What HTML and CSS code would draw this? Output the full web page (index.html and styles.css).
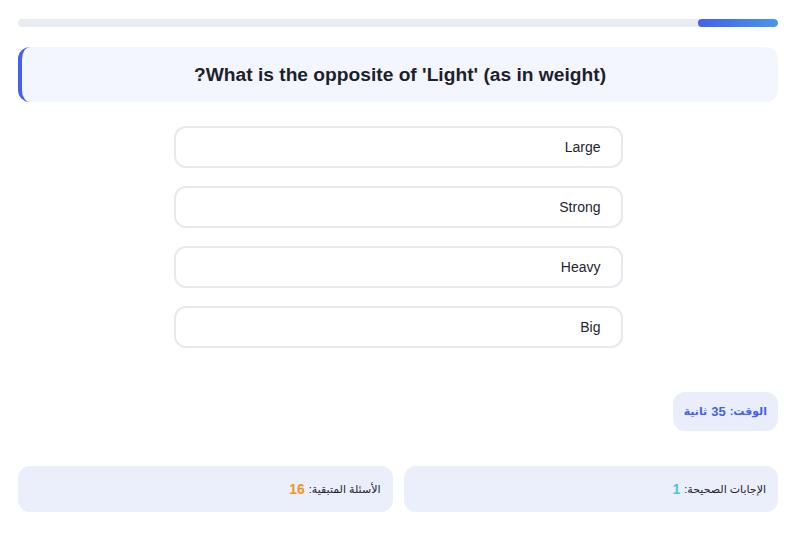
FILE: index.html
```html
<!DOCTYPE html>
<html lang="ar" dir="rtl">
 <head>
     <title>اختبار</title>
     <link rel="stylesheet" href="styles.css">
     <meta charset="UTF-8">
 </head>
 <body>
    <div class="quiz">
      <div class="progress"><div class="progress_fill" style="width: 10.5%"></div></div>
      <div class="question">What is the opposite of 'Light' (as in weight)?</div>
      <div class="options">
        <button class="option">Large</button>
        <button class="option">Strong</button>
        <button class="option">Heavy</button>
        <button class="option">Big</button>
      </div>
      <div class="timer_row">
        <div class="timer">الوقت: <b>35</b> ثانية</div>
      </div>
      <div class="stats">
        <div class="stat">الإجابات الصحيحة: <b class="num_ok">1</b></div>
        <div class="stat">الأسئلة المتبقية: <b class="num_left">16</b></div>
      </div>
    </div>
 </body>
</html>
```

FILE: styles.css
```css
body {
    margin: 0;
    font-family: "Liberation Sans", "DejaVu Sans", Arial, sans-serif;
    color: #1f2430;
    background: #ffffff;
}
.quiz {
    padding: 19px 15px 0 18px;
}
.progress {
    height: 8px;
    background: #e8ebef;
    border-radius: 4px;
    overflow: hidden;
}
.progress_fill {
    height: 100%;
    border-radius: 4px;
    background: linear-gradient(to left, #4895ef, #4361ee);
}
.question {
    margin-top: 20px;
    height: 55px;
    display: flex;
    align-items: center;
    justify-content: center;
    background: #f3f6fe;
    border-left: 4px solid #4361ee;
    border-radius: 12px;
    font-size: 19.2px;
    font-weight: bold;
    color: #1e1f2b;
}
.options {
    margin: 24px auto 0;
    width: 449px;
    display: flex;
    flex-direction: column;
    gap: 18px;
}
.option {
    height: 42px;
    background: #ffffff;
    border: 2px solid #e6e9ed;
    border-radius: 12px;
    padding: 0 20px;
    text-align: right;
    font-family: inherit;
    font-size: 14px;
    color: #1f2430;
}
.timer_row {
    margin-top: 44px;
    display: flex;
}
.timer {
    height: 39px;
    padding: 0 11px;
    display: flex;
    align-items: center;
    gap: 4px;
    background: #eaeefc;
    border-radius: 12px;
    color: #4361ee;
    font-size: 11px;
    font-weight: bold;
}
.timer b { font-size: 13px; }
.stats {
    margin-top: 35px;
    display: grid;
    grid-template-columns: 1fr 1fr;
    gap: 11px;
}
.stat {
    height: 46px;
    padding: 0 12px;
    display: flex;
    align-items: center;
    gap: 4px;
    background: #ebeffc;
    border-radius: 12px;
    font-size: 11px;
    color: #1f2430;
}
.stat b { font-size: 14px; }
.num_ok { color: #4cc0ef; }
.num_left { color: #f7931e; }
```
